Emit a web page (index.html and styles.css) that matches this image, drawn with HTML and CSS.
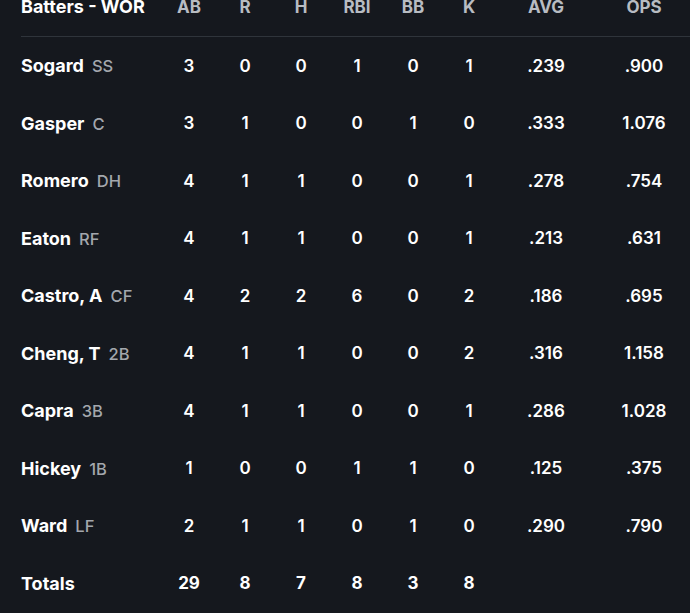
FILE: index.html
```html
<!DOCTYPE html>
<html>
<head>
<meta charset="utf-8">
<link rel="stylesheet" href="styles.css">
</head>
<body>
<div class="box">
  <div class="row head">
    <div class="name">Batters - WOR</div>
    <div class="c">AB</div><div class="c">R</div><div class="c">H</div><div class="c">RBI</div><div class="c">BB</div><div class="c">K</div><div class="c">AVG</div><div class="c">OPS</div>
  </div>
  <div class="row"><div class="name">Sogard<span class="pos">SS</span></div><div class="c">3</div><div class="c">0</div><div class="c">0</div><div class="c">1</div><div class="c">0</div><div class="c">1</div><div class="c">.239</div><div class="c">.900</div></div>
  <div class="row"><div class="name">Gasper<span class="pos">C</span></div><div class="c">3</div><div class="c">1</div><div class="c">0</div><div class="c">0</div><div class="c">1</div><div class="c">0</div><div class="c">.333</div><div class="c">1.076</div></div>
  <div class="row"><div class="name">Romero<span class="pos">DH</span></div><div class="c">4</div><div class="c">1</div><div class="c">1</div><div class="c">0</div><div class="c">0</div><div class="c">1</div><div class="c">.278</div><div class="c">.754</div></div>
  <div class="row"><div class="name">Eaton<span class="pos">RF</span></div><div class="c">4</div><div class="c">1</div><div class="c">1</div><div class="c">0</div><div class="c">0</div><div class="c">1</div><div class="c">.213</div><div class="c">.631</div></div>
  <div class="row"><div class="name">Castro, A<span class="pos">CF</span></div><div class="c">4</div><div class="c">2</div><div class="c">2</div><div class="c">6</div><div class="c">0</div><div class="c">2</div><div class="c">.186</div><div class="c">.695</div></div>
  <div class="row"><div class="name">Cheng, T<span class="pos">2B</span></div><div class="c">4</div><div class="c">1</div><div class="c">1</div><div class="c">0</div><div class="c">0</div><div class="c">2</div><div class="c">.316</div><div class="c">1.158</div></div>
  <div class="row"><div class="name">Capra<span class="pos">3B</span></div><div class="c">4</div><div class="c">1</div><div class="c">1</div><div class="c">0</div><div class="c">0</div><div class="c">1</div><div class="c">.286</div><div class="c">1.028</div></div>
  <div class="row"><div class="name">Hickey<span class="pos">1B</span></div><div class="c">1</div><div class="c">0</div><div class="c">0</div><div class="c">1</div><div class="c">1</div><div class="c">0</div><div class="c">.125</div><div class="c">.375</div></div>
  <div class="row"><div class="name">Ward<span class="pos">LF</span></div><div class="c">2</div><div class="c">1</div><div class="c">1</div><div class="c">0</div><div class="c">1</div><div class="c">0</div><div class="c">.290</div><div class="c">.790</div></div>
  <div class="row total"><div class="name">Totals</div><div class="c">29</div><div class="c">8</div><div class="c">7</div><div class="c">8</div><div class="c">3</div><div class="c">8</div><div class="c"></div><div class="c"></div></div>
</div>
</body>
</html>
```
FILE: styles.css
```css
html, body {
  margin: 0;
  padding: 0;
  background: #15181e;
  overflow: hidden;
}
body {
  width: 690px;
  height: 613px;
  font-family: Inter, "Noto Sans", sans-serif;
  color: #ffffff;
}
.box {
  padding-left: 21px;
}
.row {
  display: grid;
  grid-template-columns: 140px repeat(6, 56px) 98px 98px;
  align-items: center;
  height: 57.5px;
  font-size: 17px;
  font-weight: 600;
}
.row .name {
  font-weight: 700;
  font-size: 18px;
  white-space: nowrap;
}
.row .c {
  text-align: center;
}
.pos {
  color: #a3a7ad;
  font-weight: 500;
  font-size: 16.5px;
  margin-left: 8px;
}
.head {
  height: 37px;
  align-items: start;
  line-height: 14px;
  border-bottom: 1px solid #2f343b;
  box-sizing: border-box;
}
.head .c {
  color: #b8bcc2;
  font-weight: 700;
}
.total .c {
  font-weight: 700;
}
```
